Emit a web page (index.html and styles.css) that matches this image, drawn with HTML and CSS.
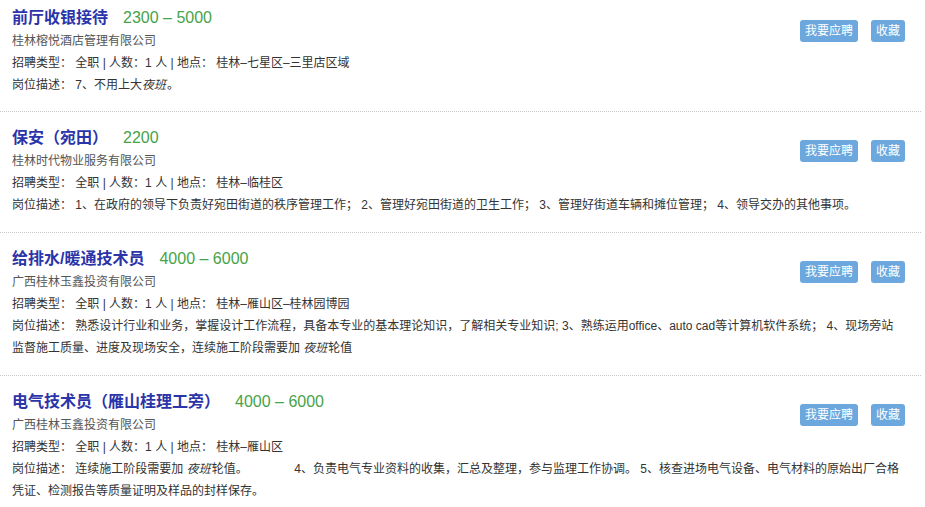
FILE: index.html
```html
<!DOCTYPE html>
<html lang="zh-CN">
<head>
<meta charset="utf-8">
<title>职位列表</title>
<link rel="stylesheet" href="styles.css">
</head>
<body>
<div class="list">
  <div class="job">
    <div class="actions"><a class="btn">我要应聘</a><a class="btn">收藏</a></div>
    <div class="title-row"><span class="title">前厅收银接待</span><span class="salary">2300 – 5000</span></div>
    <div class="company">桂林榕悦酒店管理有限公司</div>
    <div class="line">招聘类型： 全职 | 人数：1 人 | 地点： 桂林–七星区–三里店区域</div>
    <div class="line">岗位描述： 7、不用上大<em>夜班</em>。</div>
  </div>
  <div class="job">
    <div class="actions"><a class="btn">我要应聘</a><a class="btn">收藏</a></div>
    <div class="title-row"><span class="title">保安（宛田）</span><span class="salary">2200</span></div>
    <div class="company">桂林时代物业服务有限公司</div>
    <div class="line">招聘类型： 全职 | 人数：1 人 | 地点： 桂林–临桂区</div>
    <div class="line">岗位描述： 1、在政府的领导下负责好宛田街道的秩序管理工作； 2、管理好宛田街道的卫生工作； 3、管理好街道车辆和摊位管理； 4、领导交办的其他事项。</div>
  </div>
  <div class="job">
    <div class="actions"><a class="btn">我要应聘</a><a class="btn">收藏</a></div>
    <div class="title-row"><span class="title">给排水/暖通技术员</span><span class="salary">4000 – 6000</span></div>
    <div class="company">广西桂林玉鑫投资有限公司</div>
    <div class="line">招聘类型： 全职 | 人数：1 人 | 地点： 桂林–雁山区–桂林园博园</div>
    <div class="line">岗位描述： 熟悉设计行业和业务，掌握设计工作流程，具备本专业的基本理论知识，了解相关专业知识; 3、熟练运用office、auto cad等计算机软件系统； 4、现场旁站监督施工质量、进度及现场安全，连续施工阶段需要加 <em>夜班</em>轮值</div>
  </div>
  <div class="job">
    <div class="actions"><a class="btn">我要应聘</a><a class="btn">收藏</a></div>
    <div class="title-row"><span class="title">电气技术员（雁山桂理工旁）</span><span class="salary">4000 – 6000</span></div>
    <div class="company">广西桂林玉鑫投资有限公司</div>
    <div class="line">招聘类型： 全职 | 人数：1 人 | 地点： 桂林–雁山区</div>
    <div class="line">岗位描述： 连续施工阶段需要加 <em>夜班</em>轮值。　　　&nbsp;&nbsp;&nbsp;&nbsp; 4、负责电气专业资料的收集，汇总及整理，参与监理工作协调。 5、核查进场电气设备、电气材料的原始出厂合格凭证、检测报告等质量证明及样品的封样保存。</div>
  </div>
</div>
</body>
</html>
```
FILE: styles.css
```css
html, body {
  margin: 0;
  padding: 0;
  background: #fff;
}
body {
  font-family: "Liberation Sans", "Noto Sans CJK SC", sans-serif;
  font-size: 12px;
  color: #333;
}
.list {
  width: 921px;
}
.job {
  padding: 14px 16px 16px 12px;
  border-bottom: 1px dotted #c8c8c8;
}
.job:first-child {
  padding-top: 6px;
  padding-bottom: 15px;
}
.job::after {
  content: "";
  display: block;
  clear: both;
}
.actions {
  float: right;
  display: flex;
  gap: 13px;
  margin-top: 14px;
}
.btn {
  display: block;
  height: 22px;
  line-height: 22px;
  padding: 0 5px;
  background: #6ca8dd;
  color: #fff;
  border-radius: 3px;
  font-size: 12px;
}
.title-row {
  height: 24px;
  line-height: 24px;
}
.title {
  font-size: 16px;
  font-weight: bold;
  color: #2b34a8;
  margin-right: 15px;
}
.salary {
  font-size: 16px;
  color: #47a347;
}
.company {
  line-height: 22px;
  color: #555;
}
.line {
  line-height: 22px;
  color: #333;
}
em {
  font-style: italic;
  margin-right: 1px;
}
```
